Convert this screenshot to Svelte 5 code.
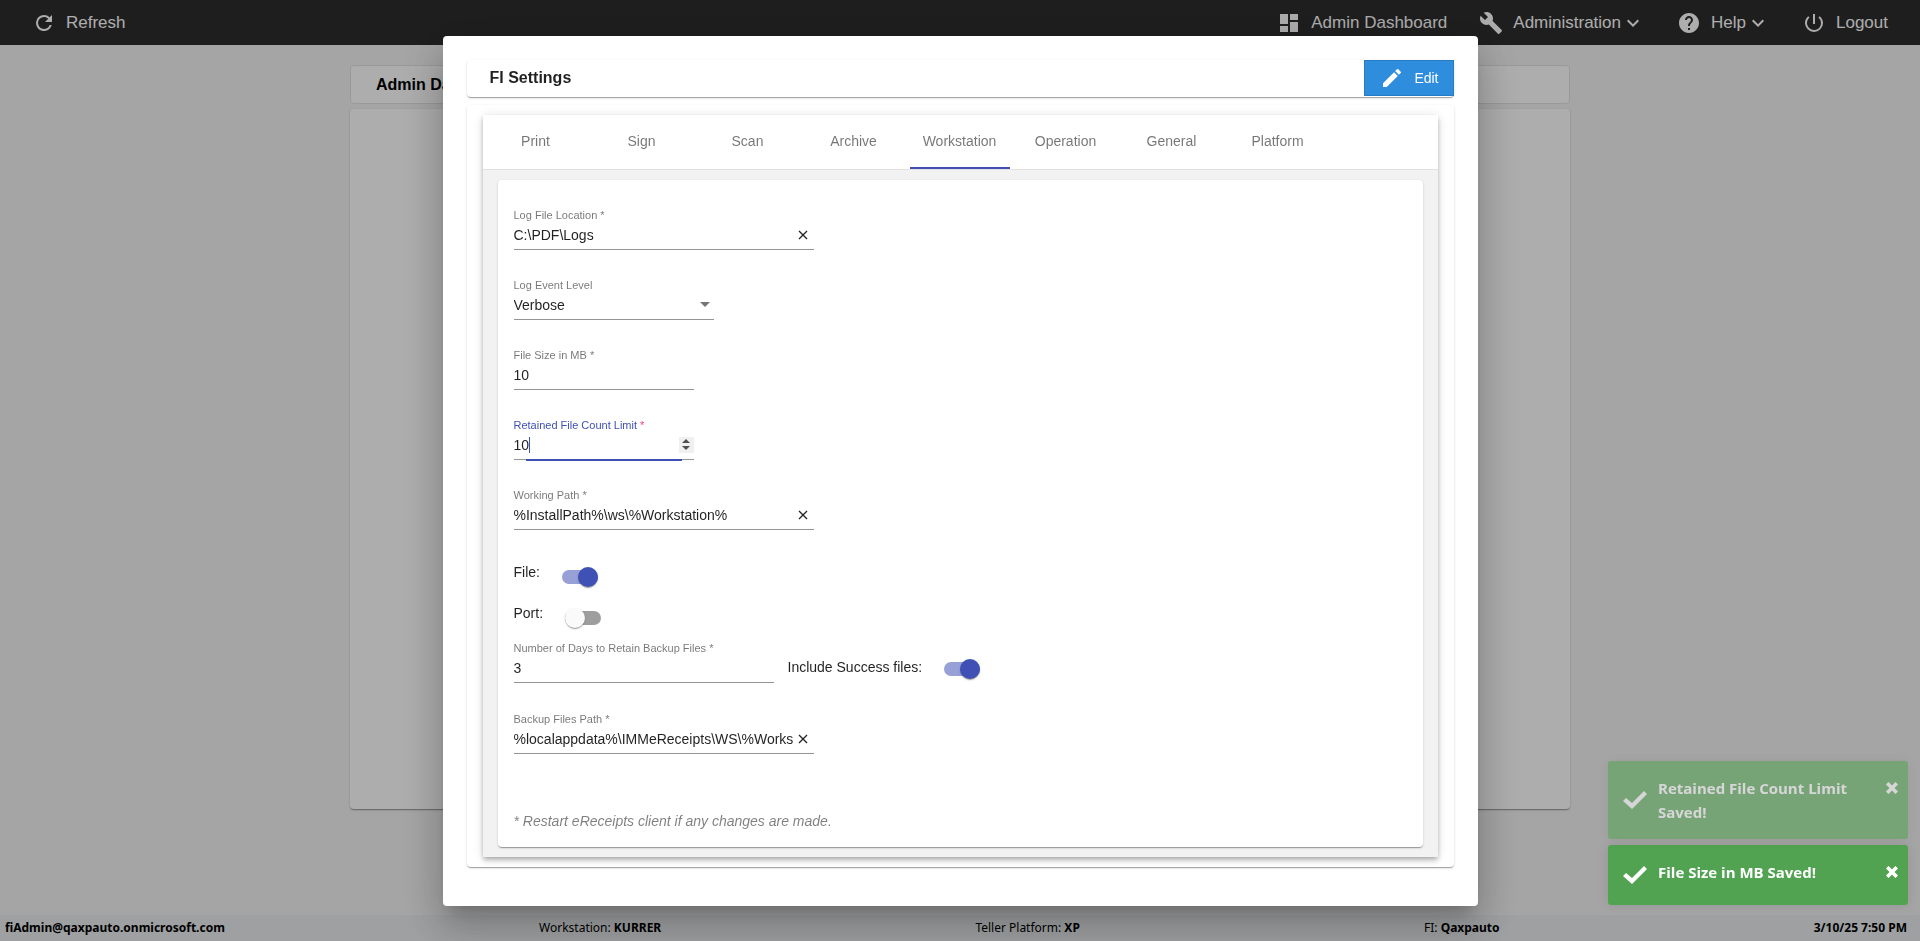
<script lang="ts">
  const tabs = ['Print', 'Sign', 'Scan', 'Archive', 'Workstation', 'Operation', 'General', 'Platform'];

  let activeTab = $state('Workstation');

  let settings = $state({
    logLocation: 'C:\\PDF\\Logs',
    logLevel: 'Verbose',
    fileSize: 10,
    retainedCount: 10,
    workingPath: '%InstallPath%\\ws\\%Workstation%',
    file: true,
    port: false,
    retainDays: 3,
    includeSuccess: true,
    backupPath: '%localappdata%\\IMMeReceipts\\WS\\%Workstation%',
  });

  let toasts = $state([
    { id: 2, text: 'Retained File Count Limit Saved!', fading: true },
    { id: 1, text: 'File Size in MB Saved!', fading: false },
  ]);

  function dismiss(id: number) {
    toasts = toasts.filter((t) => t.id !== id);
  }
</script>

{#snippet icon(path: string)}
  <svg class="icon" viewBox="0 0 24 24" aria-hidden="true"><path d={path} /></svg>
{/snippet}

{#snippet clearButton(onclear: () => void)}
  <button class="clear" type="button" aria-label="Clear" onclick={onclear}>
    <svg viewBox="0 0 10 10" aria-hidden="true"><path d="M1 1l8 8M9 1l-8 8" /></svg>
  </button>
{/snippet}

{#snippet chevron()}
  {@render icon('M7.41 8.59L12 13.17l4.59-4.58L18 10l-6 6-6-6z')}
{/snippet}

<div class="page">
  <nav class="toolbar">
    <a href="#refresh" class="nav-item">
      {@render icon('M17.65 6.35A7.95 7.95 0 0 0 12 4a8 8 0 1 0 7.73 10h-2.08A6 6 0 1 1 12 6c1.66 0 3.14.69 4.22 1.78L13 11h7V4z')}
      <span>Refresh</span>
    </a>
    <div class="spacer"></div>
    <a href="#dashboard" class="nav-item">
      {@render icon('M3 13h8V3H3zm0 8h8v-6H3zm10 0h8V11h-8zm0-18v6h8V3z')}
      <span>Admin Dashboard</span>
    </a>
    <a href="#administration" class="nav-item">
      {@render icon('M22.7 19l-9.1-9.1c.9-2.3.4-5-1.5-6.9-2-2-5-2.4-7.4-1.3L9 6 6 9 1.6 4.7C.4 7.1.9 10.1 2.9 12.1c1.9 1.9 4.6 2.4 6.9 1.5l9.1 9.1c.4.4 1 .4 1.4 0l2.3-2.3c.5-.4.5-1.1.1-1.4z')}
      <span>Administration</span>
      <span class="caret-down">{@render chevron()}</span>
    </a>
    <a href="#help" class="nav-item">
      {@render icon('M12 2C6.48 2 2 6.48 2 12s4.48 10 10 10 10-4.48 10-10S17.52 2 12 2zm1 17h-2v-2h2zm2.07-7.75l-.9.92C13.45 12.9 13 13.5 13 15h-2v-.5c0-1.1.45-2.1 1.17-2.83l1.24-1.26c.37-.36.59-.86.59-1.41 0-1.1-.9-2-2-2s-2 .9-2 2H8c0-2.21 1.79-4 4-4s4 1.79 4 4c0 .88-.36 1.68-.93 2.25z')}
      <span>Help</span>
      <span class="caret-down">{@render chevron()}</span>
    </a>
    <a href="#logout" class="nav-item">
      {@render icon('M13 3h-2v10h2zm4.83 2.17l-1.42 1.42A6.92 6.92 0 0 1 19 12a7 7 0 1 1-11.42-5.42L6.17 5.17A8.93 8.93 0 0 0 3 12a9 9 0 0 0 18 0c0-2.74-1.23-5.18-3.17-6.83z')}
      <span>Logout</span>
    </a>
  </nav>

  <main>
    <div class="page-title">Admin Dashboard</div>
    <div class="page-card"></div>
  </main>

  <footer>
    <b>fiAdmin@qaxpauto.onmicrosoft.com</b>
    <span>Workstation: <b>KURRER</b></span>
    <span class="platform">Teller Platform: <b>XP</b></span>
    <span>FI: <b>Qaxpauto</b></span>
    <b>3/10/25 7:50 PM</b>
  </footer>
</div>

<div class="backdrop">
  <div class="dialog" role="dialog" aria-labelledby="dialog-title">
    <header class="card dialog-header">
      <h1 id="dialog-title">FI Settings</h1>
      <button class="btn-edit" type="button">
        {@render icon('M3 17.25V21h3.75L17.81 9.94l-3.75-3.75zM20.71 7.04a1 1 0 0 0 0-1.41l-2.34-2.34a1 1 0 0 0-1.41 0l-1.83 1.83 3.75 3.75z')}
        <span>Edit</span>
      </button>
    </header>

    <div class="card dialog-content">
      <div class="tab-group">
        <div class="tabs" role="tablist">
          {#each tabs as tab (tab)}
            <button
              class="tab"
              class:active={tab === activeTab}
              role="tab"
              aria-selected={tab === activeTab}
              onclick={() => (activeTab = tab)}
            >
              {tab}
            </button>
          {/each}
        </div>

        <div class="tab-body">
          <form class="card settings">
            <div class="field wide">
              <label for="log-location">Log File Location *</label>
              <div class="control">
                <input id="log-location" type="text" bind:value={settings.logLocation} />
                {@render clearButton(() => (settings.logLocation = ''))}
              </div>
            </div>

            <div class="field medium">
              <label for="log-level">Log Event Level</label>
              <div class="control">
                <select id="log-level" bind:value={settings.logLevel}>
                  <option>Verbose</option>
                  <option>Debug</option>
                  <option>Information</option>
                  <option>Warning</option>
                  <option>Error</option>
                </select>
                <span class="arrow"></span>
              </div>
            </div>

            <div class="field small">
              <label for="file-size">File Size in MB *</label>
              <div class="control">
                <input id="file-size" type="number" bind:value={settings.fileSize} />
              </div>
            </div>

            <div class="field small focused">
              <label for="retained-count">Retained File Count Limit <span class="required">*</span></label>
              <div class="control">
                <input id="retained-count" type="number" bind:value={settings.retainedCount} />
                <span class="text-caret"></span>
                <div class="spinner">
                  <button type="button" class="up" aria-label="Increase" onclick={() => settings.retainedCount++}></button>
                  <button type="button" class="down" aria-label="Decrease" onclick={() => settings.retainedCount--}></button>
                </div>
              </div>
            </div>

            <div class="field wide">
              <label for="working-path">Working Path *</label>
              <div class="control">
                <input id="working-path" type="text" bind:value={settings.workingPath} />
                {@render clearButton(() => (settings.workingPath = ''))}
              </div>
            </div>

            <div class="switches">
              <label class="switch">
                <span>File:</span>
                <input type="checkbox" bind:checked={settings.file} />
              </label>
              <label class="switch">
                <span>Port:</span>
                <input type="checkbox" bind:checked={settings.port} />
              </label>
            </div>

            <div class="backup-row">
              <div class="field large">
                <label for="retain-days">Number of Days to Retain Backup Files *</label>
                <div class="control">
                  <input id="retain-days" type="number" bind:value={settings.retainDays} />
                </div>
              </div>
              <label class="switch include">
                <span>Include Success files:</span>
                <input type="checkbox" bind:checked={settings.includeSuccess} />
              </label>
            </div>

            <div class="field wide">
              <label for="backup-path">Backup Files Path *</label>
              <div class="control">
                <input id="backup-path" type="text" bind:value={settings.backupPath} />
                {@render clearButton(() => (settings.backupPath = ''))}
              </div>
            </div>

            <p class="note">* Restart eReceipts client if any changes are made.</p>
          </form>
        </div>
      </div>
    </div>
  </div>
</div>

<div class="toasts">
  {#each toasts as toast (toast.id)}
    <div class="toast" class:fading={toast.fading} role="alert">
      <svg class="check" viewBox="0 0 24 18" aria-hidden="true"><path d="M0 10l3-3 6 5L21 0l3 3L9 18z" /></svg>
      <span class="message">{toast.text}</span>
      <button type="button" aria-label="Close" onclick={() => dismiss(toast.id)}>
        <svg viewBox="0 0 10 10" aria-hidden="true"><path d="M1 1l8 8M9 1l-8 8" /></svg>
      </button>
    </div>
  {/each}
</div>

<style>
  :global(body) {
    font-family: 'Liberation Sans', Arial, sans-serif;
    font-size: 14px;
    color: rgba(0, 0, 0, 0.87);
  }

  .page {
    min-height: 100vh;
    display: flex;
    flex-direction: column;
    background: #f3f3f3;
  }

  .toolbar {
    height: 45px;
    display: flex;
    align-items: center;
    gap: 32px;
    padding: 0 32px;
    background: #2d2d2d;
  }

  .nav-item {
    display: flex;
    align-items: center;
    gap: 10px;
    font-size: 17px;
    line-height: 20px;
    color: #fff;
    text-decoration: none;
  }

  .spacer {
    flex: 1;
  }

  .icon {
    display: block;
    width: 24px;
    height: 24px;
    fill: currentColor;
  }

  .caret-down {
    margin-left: -10px;
  }

  main {
    flex: 1;
    box-sizing: border-box;
    width: 100%;
    max-width: 1220px;
    margin: 0 auto;
    padding: 20px 0 106px;
    display: flex;
    flex-direction: column;
    gap: 5px;
  }

  .page-title {
    padding: 0 25px;
    border: 1px solid #e2e2e2;
    border-radius: 4px;
    background: #fff;
    font-size: 16px;
    font-weight: 700;
    line-height: 37px;
    color: #000;
  }

  .page-card {
    flex: 1;
    border-radius: 4px;
    background: #fff;
  }

  .page-card,
  .card {
    box-shadow: 0 2px 1px -1px rgba(0, 0, 0, 0.2), 0 1px 1px 0 rgba(0, 0, 0, 0.14), 0 1px 3px 0 rgba(0, 0, 0, 0.12);
  }

  footer {
    display: flex;
    justify-content: space-between;
    padding: 0 13px 0 5px;
    background: #e9ecef;
    font-family: 'Noto Sans', 'Open Sans', sans-serif;
    font-size: 12px;
    line-height: 26px;
    color: #000;
  }

  .platform {
    padding-right: 30px;
  }

  .backdrop {
    position: fixed;
    inset: 0;
    display: grid;
    place-items: center;
    background: rgba(0, 0, 0, 0.32);
  }

  .dialog {
    box-sizing: border-box;
    width: 1035px;
    max-width: 90vw;
    padding: 24px 24px 39px;
    border-radius: 4px;
    background: #fff;
    box-shadow: 0 11px 15px -7px rgba(0, 0, 0, 0.2), 0 24px 38px 3px rgba(0, 0, 0, 0.14), 0 9px 46px 8px rgba(0, 0, 0, 0.12);
  }

  .card {
    border-radius: 4px;
    background: #fff;
  }

  .dialog-header {
    display: flex;
    justify-content: space-between;
    padding: 0 0 1px 23px;
    margin-bottom: 8px;
  }

  h1 {
    margin: 0;
    font-size: 16px;
    font-weight: 700;
    line-height: 35px;
  }

  .btn-edit {
    display: flex;
    align-items: center;
    gap: 10px;
    height: 36px;
    padding: 0 14px 0 15px;
    border: 1px solid #2a7cc2;
    background: #2f8dde;
    color: #fff;
    font: inherit;
    cursor: pointer;
  }

  .dialog-content {
    padding: 10px 16px;
  }

  .tab-group {
    background: #f2f2f2;
    box-shadow: 0 2px 4px -1px rgba(0, 0, 0, 0.2), 0 4px 5px 0 rgba(0, 0, 0, 0.14), 0 1px 10px 0 rgba(0, 0, 0, 0.12);
  }

  .tabs {
    display: flex;
    gap: 6px;
    padding: 0 3px;
    border-bottom: 1px solid #e0e0e0;
    background: #fff;
  }

  .tab {
    width: 100px;
    height: 54px;
    padding: 0;
    border: 0;
    border-bottom: 2px solid transparent;
    background: none;
    color: rgba(0, 0, 0, 0.54);
    font: inherit;
    cursor: pointer;
  }

  .tab.active {
    border-bottom-color: #3f51b5;
  }

  .tab-body {
    padding: 10px 15px;
  }

  .settings {
    padding: 27px 16px 16px;
  }

  .field {
    margin-bottom: 27px;
    border-bottom: 1px solid rgba(0, 0, 0, 0.42);
    position: relative;
  }

  .wide {
    width: 300px;
  }

  .large {
    width: 260px;
  }

  .medium {
    width: 200px;
  }

  .small {
    width: 180px;
  }

  .field label {
    display: block;
    font-size: 11px;
    line-height: 16px;
    color: rgba(0, 0, 0, 0.54);
    white-space: nowrap;
  }

  .control {
    display: flex;
    align-items: center;
    height: 24px;
    padding-bottom: 2px;
    position: relative;
  }

  .field input,
  .field select {
    flex: 1;
    min-width: 0;
    height: 24px;
    padding: 0;
    border: 0;
    outline: 0;
    background: none;
    color: inherit;
    font: inherit;
    appearance: none;
  }

  .field input[type='number'] {
    appearance: textfield;
  }

  .clear {
    width: 21px;
    height: 24px;
    padding: 0 6px 0 5px;
    border: 0;
    background: none;
    cursor: pointer;
  }

  .clear svg {
    display: block;
    width: 10px;
    height: 10px;
    stroke: #222;
    stroke-width: 1.3;
  }

  .arrow {
    margin-right: 4px;
    border: 5px solid transparent;
    border-top-color: rgba(0, 0, 0, 0.54);
    border-bottom: 0;
  }

  .focused label {
    color: #3f51b5;
  }

  .field .required {
    color: #ff4081;
  }

  .focused::after {
    content: '';
    position: absolute;
    left: 12px;
    right: 12px;
    bottom: -2px;
    height: 2px;
    background: #3f51b5;
  }

  .text-caret {
    position: absolute;
    left: 15px;
    top: 4px;
    width: 1px;
    height: 16px;
    background: #3f51b5;
  }

  .spinner {
    display: flex;
    flex-direction: column;
    align-items: center;
    justify-content: center;
    gap: 3px;
    width: 15px;
    height: 16px;
    background: #f0f0f0;
  }

  .spinner button {
    width: 0;
    height: 0;
    padding: 0;
    border: 4px solid transparent;
    background: none;
  }

  .spinner .up {
    border-top: 0;
    border-bottom-color: #505050;
  }

  .spinner .down {
    border-bottom: 0;
    border-top-color: #505050;
  }

  .switches {
    display: flex;
    flex-direction: column;
    align-items: flex-start;
    gap: 16px;
    margin: 32px 0 12px;
  }

  .switch {
    display: flex;
    align-items: flex-start;
    gap: 22px;
    line-height: 20px;
  }

  .switch input {
    position: relative;
    width: 36px;
    height: 14px;
    margin: 8px 0 3px;
    border-radius: 7px;
    background: rgba(0, 0, 0, 0.38);
    appearance: none;
    cursor: pointer;
  }

  .switch input::before {
    content: '';
    position: absolute;
    top: -3px;
    left: 0;
    width: 20px;
    height: 20px;
    border-radius: 50%;
    background: #fafafa;
    box-shadow: 0 2px 1px -1px rgba(0, 0, 0, 0.2), 0 1px 1px 0 rgba(0, 0, 0, 0.14), 0 1px 3px 0 rgba(0, 0, 0, 0.12);
  }

  .switch input:checked {
    background: rgba(63, 81, 181, 0.54);
  }

  .switch input:checked::before {
    left: 16px;
    background: #3f51b5;
  }

  .backup-row {
    display: flex;
    align-items: flex-start;
    gap: 14px;
    margin-bottom: 28px;
  }

  .backup-row .field {
    margin-bottom: 0;
  }

  .include {
    margin-top: 17px;
  }

  .include input {
    margin-top: 5px;
  }

  .note {
    margin: 57px 0 0;
    line-height: 20px;
    font-style: italic;
    color: rgba(0, 0, 0, 0.5);
  }

  .toasts {
    position: fixed;
    right: 12px;
    bottom: 36px;
    display: flex;
    flex-direction: column;
    gap: 6px;
    width: 300px;
  }

  .toast {
    box-sizing: border-box;
    min-height: 60px;
    padding: 15px;
    display: flex;
    align-items: flex-start;
    border-radius: 3px;
    background: #51a351;
    box-shadow: 0 0 12px rgba(0, 0, 0, 0.1);
    color: #fff;
    font-family: 'Open Sans', 'Noto Sans', sans-serif;
    font-size: 15px;
    font-weight: 700;
    line-height: 24px;
  }

  .toast.fading {
    opacity: 0.54;
  }

  .check {
    align-self: center;
    flex-shrink: 0;
    width: 24px;
    height: 18px;
    margin-right: 11px;
    fill: currentColor;
  }

  .message {
    flex: 1;
  }

  .toast button {
    padding: 6px 0;
    margin-right: -5px;
    border: 0;
    background: none;
    color: inherit;
    cursor: pointer;
  }

  .toast button svg {
    display: block;
    width: 12px;
    height: 12px;
    stroke: currentColor;
    stroke-width: 3;
  }
</style>
